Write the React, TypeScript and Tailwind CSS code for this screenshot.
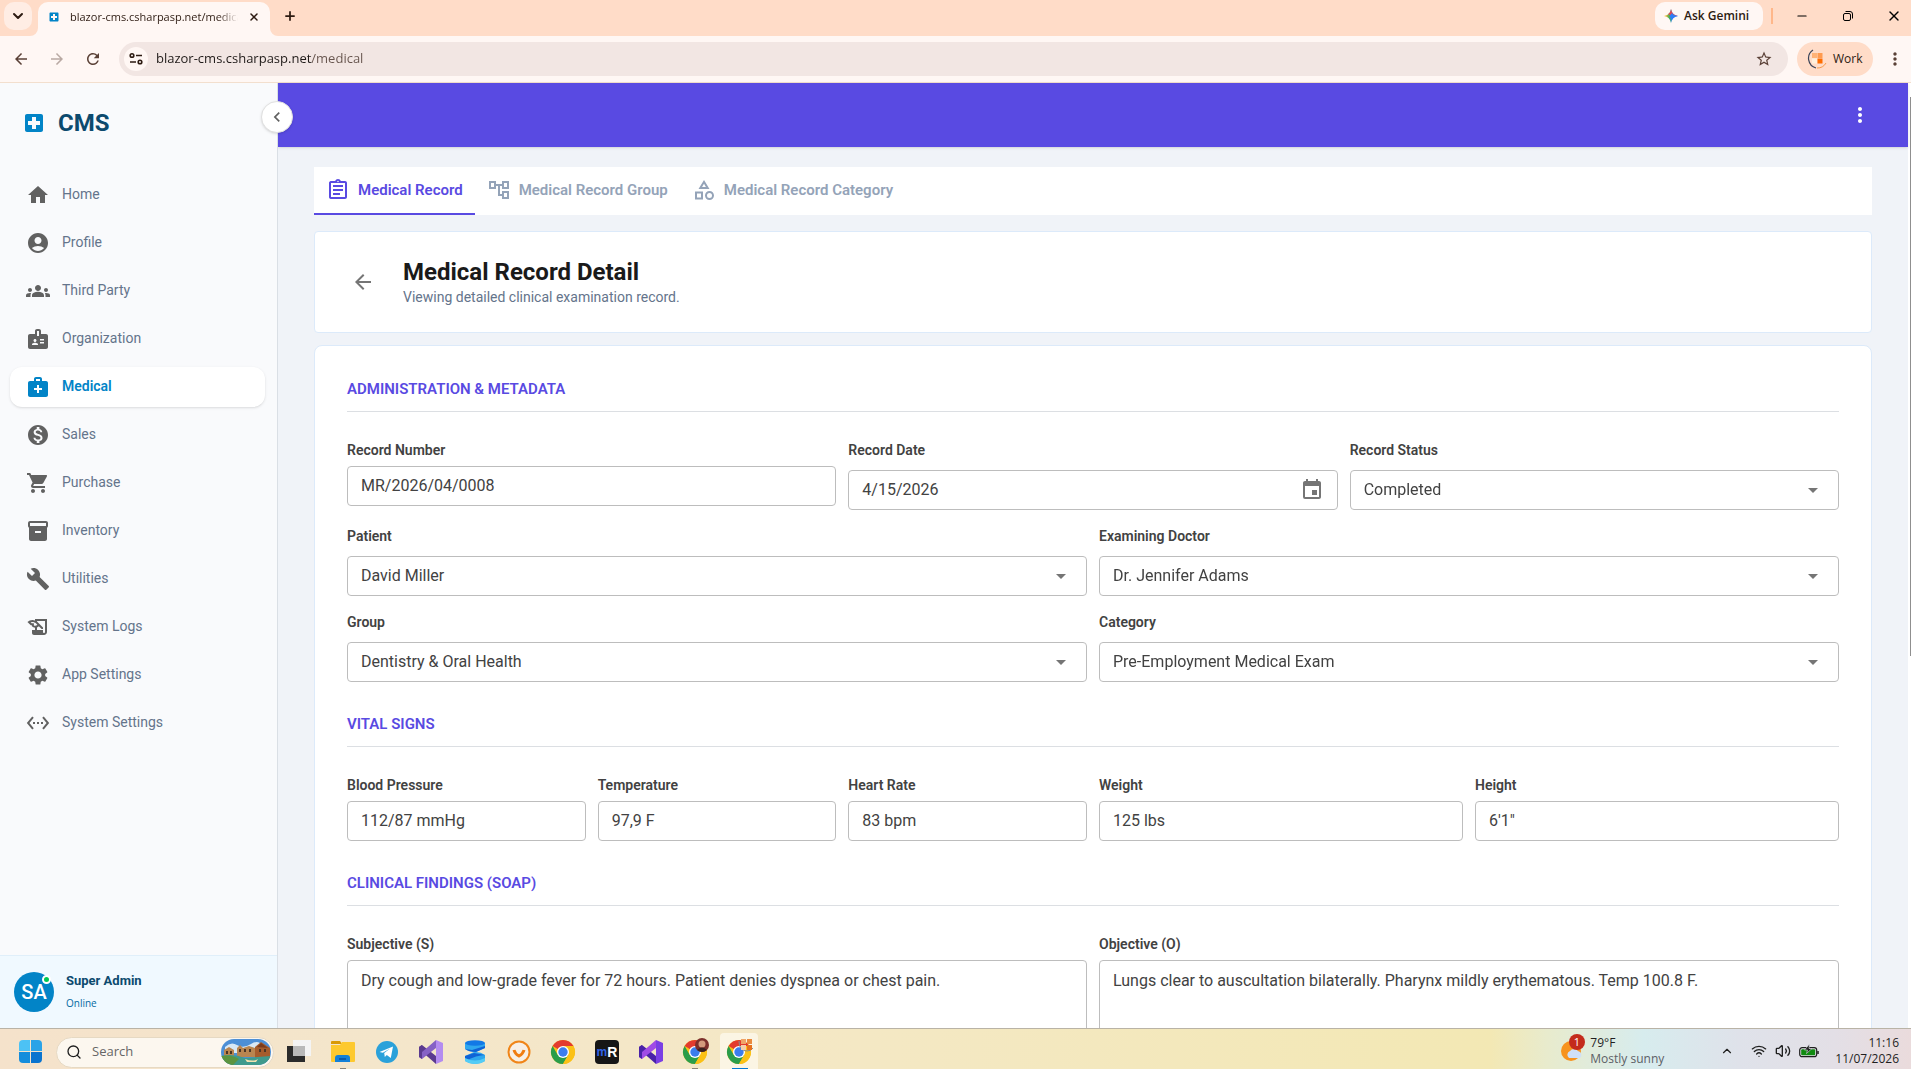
import type { ComponentType, ReactNode } from "react";
import {
  MdAccountCircle, MdArrowBack, MdArrowDropDown, MdArrowForward, MdBadge, MdBuild, MdChevronLeft,
  MdEvent, MdGroups, MdHistoryEdu, MdHome, MdInventory2, MdLocalHospital, MdMedicalServices,
  MdMonetizationOn, MdMoreVert, MdOutlineAccountTree, MdOutlineAssignment, MdOutlineCategory,
  MdRefresh, MdSettings, MdSettingsEthernet, MdShoppingCart, MdStarBorder,
} from "react-icons/md";
import { ChevronDown, ChevronUp, Minus, Plus, Search, Volume2, Wifi, X } from "lucide-react";

type Icon = ComponentType<{ className?: string }>;

const NAV: { label: string; icon: Icon }[] = [
  { label: "Home", icon: MdHome },
  { label: "Profile", icon: MdAccountCircle },
  { label: "Third Party", icon: MdGroups },
  { label: "Organization", icon: MdBadge },
  { label: "Medical", icon: MdMedicalServices },
  { label: "Sales", icon: MdMonetizationOn },
  { label: "Purchase", icon: MdShoppingCart },
  { label: "Inventory", icon: MdInventory2 },
  { label: "Utilities", icon: MdBuild },
  { label: "System Logs", icon: MdHistoryEdu },
  { label: "App Settings", icon: MdSettings },
  { label: "System Settings", icon: MdSettingsEthernet },
];

const TABS: { label: string; icon: Icon }[] = [
  { label: "Medical Record", icon: MdOutlineAssignment },
  { label: "Medical Record Group", icon: MdOutlineAccountTree },
  { label: "Medical Record Category", icon: MdOutlineCategory },
];

/* ---------- browser chrome ---------- */

function TabStrip() {
  return (
    <div className="flex h-9 items-start bg-[#ffdcc8] pl-1 text-[#2d1b12]">
      <button aria-label="Search tabs" className="mt-[2px] flex h-7 w-7 items-center justify-center rounded-[10px] bg-[#ffede4]">
        <ChevronDown className="h-4 w-4" strokeWidth={3} />
      </button>
      <div className="relative ml-[6px] mt-[2px] flex h-[34px] w-[232px] items-center rounded-t-[10px] bg-[#fff7f4] pb-1 pl-[10px]">
        {/* curved feet of the active tab */}
        <svg className="absolute -left-2 bottom-0 h-2 w-2" viewBox="0 0 8 8"><path d="M8 0v8H0a8 8 0 0 0 8-8z" fill="#fff7f4" /></svg>
        <svg className="absolute -right-2 bottom-0 h-2 w-2" viewBox="0 0 8 8"><path d="M0 0v8h8a8 8 0 0 1-8-8z" fill="#fff7f4" /></svg>
        <MdLocalHospital className="h-3 w-3 text-[#0284c7]" />
        <span className="ml-[10px] w-[168px] overflow-hidden whitespace-nowrap text-[11px] [mask-image:linear-gradient(to_right,black_88%,transparent)]">
          blazor-cms.csharpasp.net/medical
        </span>
        <button aria-label="Close tab" className="ml-2 flex h-4 w-4 items-center justify-center"><X className="h-3 w-3" strokeWidth={3} /></button>
      </div>
      <button aria-label="New tab" className="ml-[13px] mt-[9px]"><Plus className="h-[14px] w-[14px]" strokeWidth={3} /></button>
      <div className="flex-1" />
      <button className="mt-[2px] flex h-7 w-[108px] items-center gap-[6px] rounded-[10px] bg-[#fff7f4] pl-[9px] text-xs font-semibold">
        <svg className="h-[14px] w-[14px]" viewBox="0 0 14 14">
          <defs>
            <linearGradient id="gem" x1="0" y1="0" x2="1" y2="0">
              <stop offset="0.1" stopColor="#f5b81c" /><stop offset="0.4" stopColor="#3fae62" /><stop offset="0.6" stopColor="#2f7df6" />
            </linearGradient>
          </defs>
          <path d="M7 0q1 6 7 7-6 1-7 7-1-6-7-7 6-1 7-7z" fill="url(#gem)" />
          <path d="M7 0q1 6 7 7H7L4 5Q6.500 4 7 0z" fill="#e5484d" />
          <path d="M8 4q1.500 2.500 6 3-5 .8-6 4L5.500 7z" fill="#2f7df6" />
        </svg>
        Ask Gemini
      </button>
      <div className="ml-2 mt-2 h-4 w-[2px] bg-[#ffb78a]" />
      <div className="flex text-black">
        <button aria-label="Minimize" className="flex h-8 w-[46px] items-center justify-center pl-3"><Minus className="h-[14px] w-[14px]" strokeWidth={2} /></button>
        <button aria-label="Restore" className="flex h-8 w-[46px] items-center justify-center pl-3">
          <svg className="h-[10px] w-[10px]" viewBox="0 0 10 10" fill="none" stroke="currentColor">
            <rect x="0.5" y="2.500" width="7" height="7" rx="1.500" /><path d="M2.500 .5H7a2.500 2.500 0 0 1 2.500 2.500v4.500" />
          </svg>
        </button>
        <button aria-label="Close" className="flex h-8 w-[46px] items-center justify-center pl-3"><X className="h-4 w-4" strokeWidth={2} /></button>
      </div>
    </div>
  );
}

function Toolbar() {
  return (
    <div className="flex h-[47px] items-center border-b border-[#f3dfce] bg-[#fff7f4] pl-[11px] text-[#5a4036]">
      <button aria-label="Back" className="mr-4 p-px"><MdArrowBack className="h-[18px] w-[18px]" /></button>
      <button aria-label="Forward" className="mr-4 p-px text-[#b9a9a3]"><MdArrowForward className="h-[18px] w-[18px]" /></button>
      <button aria-label="Reload" className="mr-4 p-px"><MdRefresh className="h-[18px] w-[18px]" /></button>
      <div className="flex h-[34px] flex-1 items-center rounded-full bg-[#f2e6e3] pl-[5px] pr-[15px]">
        <button aria-label="Site information" className="flex h-6 w-6 items-center justify-center rounded-full bg-[#fff7f4]">
          <svg className="h-[14px] w-[14px]" viewBox="0 0 14 14" fill="none" stroke="#2d1b12" strokeWidth="1.600">
            <circle cx="3" cy="3.500" r="1.800" /><path d="M7 3.500h6M1 10h6" /><circle cx="11" cy="10" r="1.800" />
          </svg>
        </button>
        {/* the host is darker than the path */}
        <input
          aria-label="Address"
          defaultValue="blazor-cms.csharpasp.net/medical"
          className="ml-2 min-w-0 flex-1 bg-[linear-gradient(to_right,#1f1a18_156px,#66544d_156px)] bg-clip-text text-[13px] text-transparent outline-none"
        />
        <button aria-label="Bookmark"><MdStarBorder className="h-[18px] w-[18px]" /></button>
      </div>
      <button className="ml-[9px] flex h-[34px] w-[76px] items-center gap-[6px] rounded-full bg-[#ffdcc8] pl-[10px] text-xs text-[#2d1b12]">
        <WorkBadge className="h-5 w-5" />
        Work
      </button>
      <button aria-label="Browser menu" className="ml-3 mr-[6px]"><MdMoreVert className="h-5 w-5" /></button>
    </div>
  );
}

function WorkBadge({ className }: { className?: string }) {
  return (
    <svg className={className} viewBox="0 0 20 20">
      <path d="M6 1a10 10 0 0 0 3 18" fill="none" stroke="#3a4358" strokeWidth="1.200" />
      <path d="M10 19a10 10 0 0 0 9-5" fill="none" stroke="#f59a4c" />
      <rect x="5" y="4" width="5" height="5" fill="#ffb377" /><rect x="10.500" y="4" width="5" height="5" fill="#ff9b50" />
      <rect x="5" y="9.500" width="5" height="5" fill="#fff0dc" /><rect x="10.500" y="9.500" width="5" height="5" fill="#ff6d00" />
    </svg>
  );
}

/* ---------- app shell ---------- */

function Sidebar() {
  return (
    <aside className="relative z-10 flex w-[278px] shrink-0 flex-col border-r border-[#dadfe5] bg-[#f9fafc]">
      <div className="flex h-20 items-center gap-3 pl-[22px]">
        <MdLocalHospital className="h-6 w-6 text-[#0284c7]" />
        <span className="text-2xl font-bold text-[#0c4a6e]">CMS</span>
      </div>
      <button aria-label="Collapse sidebar" className="absolute -right-4 top-[18px] flex h-8 w-8 items-center justify-center rounded-full border border-[#e0e0e0] bg-white text-[#616161] shadow">
        <MdChevronLeft className="h-5 w-5" />
      </button>
      <nav className="flex flex-1 flex-col gap-2 px-[10px] pt-3">
        {NAV.map(({ label, icon: NavIcon }) => {
          const active = label === "Medical";
          return (
            <a
              key={label}
              href="#"
              className={
                active
                  ? "mr-[2px] flex h-10 items-center gap-3 rounded-xl bg-white pl-4 text-sm font-semibold text-[#0284c7] shadow-sm"
                  : "mr-[2px] flex h-10 items-center gap-3 rounded-xl pl-4 text-sm text-[#64748b]"
              }
            >
              <NavIcon className={active ? "h-6 w-6 text-[#0284c7]" : "h-6 w-6 text-[#616161]"} />
              <span className="pb-[2px]">{label}</span>
            </a>
          );
        })}
      </nav>
      <div className="flex h-[73px] items-center gap-3 border-t border-[#e0effa] bg-[#f0f9ff] pl-[14px]">
        <div className="relative flex h-10 w-10 items-center justify-center rounded-full bg-[#0284c7] text-xl font-medium text-white">
          SA
          <span className="absolute right-[3px] top-[3px] h-[9px] w-[9px] rounded-full border-2 border-white bg-[#00c853]" />
        </div>
        <div className="flex flex-col gap-[6px]">
          <span className="text-[13px] font-bold leading-4 text-[#0c4a6e]">Super Admin</span>
          <span className="font-['Open_Sans',sans-serif] text-[10px] leading-4 text-[#0369a1]">Online</span>
        </div>
      </div>
    </aside>
  );
}

/* ---------- form pieces ---------- */

const LABEL = "text-sm font-semibold leading-[21px] text-[#424242]";
const BOX = "h-10 w-full rounded border border-[#bdbdbd] bg-white px-[13px] text-base text-[#424242] outline-none";

function TextField({ id, label, value, span }: { id: string; label: string; value: string; span: string }) {
  return (
    <div className={`flex flex-col gap-[5px] ${span}`}>
      <label htmlFor={id} className={LABEL}>{label}</label>
      <input id={id} defaultValue={value} className={`${BOX} pb-[2px]`} />
    </div>
  );
}

function SelectField({ id, label, value, span }: { id: string; label: string; value: string; span: string }) {
  return (
    <div className={`flex flex-col gap-[9px] ${span}`}>
      <label htmlFor={id} className={LABEL}>{label}</label>
      <div className="relative">
        <select id={id} className={`${BOX} appearance-none`}><option>{value}</option></select>
        <MdArrowDropDown className="pointer-events-none absolute right-[14px] top-2 h-6 w-6 text-[#757575]" />
      </div>
    </div>
  );
}

function AreaField({ id, label, value }: { id: string; label: string; value: string }) {
  return (
    <div className="col-span-6 flex flex-col gap-[5px]">
      <label htmlFor={id} className={LABEL}>{label}</label>
      <textarea id={id} rows={4} defaultValue={value} className="w-full resize-none rounded border border-[#bdbdbd] px-[13px] py-2 text-base text-[#424242] outline-none" />
    </div>
  );
}

function Section({ title, children }: { title: string; children: ReactNode }) {
  return (
    <section>
      <h2 className="border-b border-[#dcdfe3] pb-[10px] text-[15px] font-semibold leading-[23px] text-[#594ae2]">{title}</h2>
      <div className="mt-7 grid grid-cols-12 gap-x-3 gap-y-4">{children}</div>
    </section>
  );
}

function RecordPage() {
  return (
    <main className="min-h-0 flex-1 overflow-y-auto bg-[#f0f3f8] px-9 pt-5 [scrollbar-width:none]">
      <div className="flex h-12 bg-white">
        {TABS.map(({ label, icon: TabIcon }, i) => (
          <button
            key={label}
            className={
              i === 0
                ? "flex items-center gap-2 border-b-2 border-[#594ae2] px-3 text-[15px] font-semibold text-[#594ae2]"
                : "flex items-center gap-2 border-b-2 border-transparent px-3 text-[15px] font-semibold text-[#94a3b8]"
            }
          >
            <TabIcon className="h-6 w-6" />
            {label}
          </button>
        ))}
      </div>

      <header className="mt-4 flex h-[102px] items-center rounded border border-[#dceafa] bg-white pl-9">
        <button aria-label="Back to list" className="mr-7 text-[#757575]"><MdArrowBack className="h-6 w-6" /></button>
        <div>
          <h1 className="text-2xl font-bold leading-[30px] text-[#1a1a1a]">Medical Record Detail</h1>
          <p className="text-sm text-[#64748b]">Viewing detailed clinical examination record.</p>
        </div>
      </header>

      <form className="mt-3 flex flex-col gap-[31px] rounded-lg border border-[#dceafa] bg-white p-8">
        <Section title="ADMINISTRATION & METADATA">
          <TextField id="number" label="Record Number" value="MR/2026/04/0008" span="col-span-4" />
          <div className="col-span-4 flex flex-col gap-[9px]">
            <label htmlFor="date" className={LABEL}>Record Date</label>
            <div className="relative">
              <input id="date" defaultValue="4/15/2026" className={`${BOX} pb-[2px]`} />
              <button type="button" aria-label="Pick a date" className="absolute right-[14px] top-2 text-[#757575]"><MdEvent className="h-6 w-6" /></button>
            </div>
          </div>
          <SelectField id="status" label="Record Status" value="Completed" span="col-span-4" />
          <SelectField id="patient" label="Patient" value="David Miller" span="col-span-6" />
          <SelectField id="doctor" label="Examining Doctor" value="Dr. Jennifer Adams" span="col-span-6" />
          <SelectField id="group" label="Group" value="Dentistry & Oral Health" span="col-span-6" />
          <SelectField id="category" label="Category" value="Pre-Employment Medical Exam" span="col-span-6" />
        </Section>
        <Section title="VITAL SIGNS">
          <TextField id="bp" label="Blood Pressure" value="112/87 mmHg" span="col-span-2" />
          <TextField id="temp" label="Temperature" value="97,9 F" span="col-span-2" />
          <TextField id="hr" label="Heart Rate" value="83 bpm" span="col-span-2" />
          <TextField id="weight" label="Weight" value="125 lbs" span="col-span-3" />
          <TextField id="height" label="Height" value={'6\'1"'} span="col-span-3" />
        </Section>
        <Section title="CLINICAL FINDINGS (SOAP)">
          <AreaField id="subjective" label="Subjective (S)" value="Dry cough and low-grade fever for 72 hours. Patient denies dyspnea or chest pain." />
          <AreaField id="objective" label="Objective (O)" value="Lungs clear to auscultation bilaterally. Pharynx mildly erythematous. Temp 100.8 F." />
        </Section>
      </form>
    </main>
  );
}

/* ---------- taskbar ---------- */

function ChromeLogo({ children }: { children?: ReactNode }) {
  return (
    <svg className="h-[28px] w-[28px]" viewBox="0 0 28 28">
      <circle cx="14" cy="14" r="12" fill="#fbc116" />
      <path d="M14 14 3.600 8A12 12 0 0 1 24.400 8z" fill="#e33b2e" />
      <path d="M3.600 8A12 12 0 0 0 14 26l5.200-9L14 14 8.800 17z" fill="#2a9d4a" />
      <path d="M14 8h10.400A12 12 0 0 1 14 26l5.200-9z" fill="#fbc116" />
      <circle cx="14" cy="14" r="6" fill="#fff" />
      <circle cx="14" cy="14" r="4.700" fill="#3b7ded" />
      {children}
    </svg>
  );
}

function StudioLogo({ dark, mid, light }: { dark: string; mid: string; light: string }) {
  return (
    <svg className="h-6 w-6" viewBox="0 0 24 24">
      <path d="M0 7l3-2 14 11v8L5 13.500 3 15z" fill={dark} />
      <path d="M0 7v10l3 2L17 8V0L6 9.500 3 12z" fill={mid} />
      <path d="M0 7l3-2v14l-3-2z" fill={dark} />
      <path d="M17 0l7 3v18l-7 3z" fill={light} />
    </svg>
  );
}

const APPS: { name: string; art: ReactNode }[] = [
  {
    name: "Task view",
    art: (
      <svg className="h-6 w-6" viewBox="0 0 24 24">
        <rect x="0" y="6" width="18" height="16" fill="#2b2b2b" /><rect x="6" y="0" width="18" height="16" fill="#f4f4f4" />
        <rect x="6" y="6" width="12" height="10" fill="#b9b9b9" />
      </svg>
    ),
  },
  {
    name: "File Explorer",
    art: (
      <svg className="h-6 w-6" viewBox="0 0 24 24">
        <path d="M0 2q0-1 1-1h8l2 3H0z" fill="#d99a07" /><path d="M0 5h9l2-3h12q1 0 1 1v18q0 1-1 1H1q-1 0-1-1z" fill="#fdc92f" />
        <path d="M4 22v-4q0-3 3-3h9q3 0 3 3v4z" fill="#1380d8" /><path d="M8 18h7v2H8z" fill="#0b5cad" />
      </svg>
    ),
  },
  {
    name: "Telegram",
    art: (
      <svg className="h-6 w-6" viewBox="0 0 24 24">
        <circle cx="12" cy="12" r="11" fill="#2aa1da" /><path d="M4.500 12 18 6.500 15.800 18l-4-3-2 2-.6-4 6-4.500-7.400 4.300z" fill="#fff" />
      </svg>
    ),
  },
  { name: "Visual Studio 2022", art: <StudioLogo dark="#5b3a8f" mid="#8661c5" light="#b48cf0" /> },
  {
    name: "Database Studio",
    art: (
      <svg className="h-6 w-6" viewBox="0 0 24 24">
        <path d="M2 3v6q4 3 9 3L2 16v5q5 3 10 3t10-3v-6q-4-3-9-3l9-4V3z" fill="#2fa7ee" />
        <path d="M2 9q4 3 11 3l9-4v-2L9 10zM2 21v-5l9-3 11 2q-8 0-20 6z" fill="#0f62d6" />
        <ellipse cx="12" cy="3" rx="10" ry="2.800" fill="#1279e6" /><path d="M2 18q10 5 20 0v3q-4 3-10 3T2 21z" fill="#54ccf5" />
      </svg>
    ),
  },
  {
    name: "Download manager",
    art: (
      <svg className="h-6 w-6" viewBox="0 0 24 24">
        <circle cx="12" cy="12" r="10.500" fill="#f7efe6" stroke="#f08519" strokeWidth="2" />
        <path d="M7 10q1 4 5 6 4-2 5-6" fill="none" stroke="#f07d12" strokeWidth="3" />
      </svg>
    ),
  },
  { name: "Chrome", art: <ChromeLogo /> },
  {
    name: "mRemoteNG",
    art: (
      <span className="flex h-6 w-6 items-center justify-center rounded bg-[#161616] font-['Liberation_Sans',sans-serif] text-xs font-bold text-[#2f62e8]">
        m<span className="text-sm text-white">R</span>
      </span>
    ),
  },
  { name: "Visual Studio", art: <StudioLogo dark="#4a22a8" mid="#a04be6" light="#7b3fe4" /> },
  {
    name: "Chrome, personal profile",
    art: (
      <ChromeLogo>
        <circle cx="21" cy="7" r="7" fill="#7c2f2b" /><circle cx="21" cy="6" r="3.500" fill="#d39a7c" /><path d="M16 12q5-5 10 0-5 4-10 0z" fill="#3a2320" />
      </ChromeLogo>
    ),
  },
  {
    name: "Chrome, work profile",
    art: (
      <ChromeLogo>
        <path d="M14 3q0 10 8 10 4 0 6-3" fill="none" stroke="#8b8b8b" />
        <rect x="16" y="1" width="5" height="5" fill="#f0a467" /><rect x="22" y="1" width="5" height="5" fill="#ea8a3e" />
        <rect x="16" y="7" width="5" height="5" fill="#f6cfa8" /><rect x="22" y="7" width="5" height="5" fill="#e8711c" />
      </ChromeLogo>
    ),
  },
];

function Taskbar() {
  return (
    <footer className="flex h-[41px] shrink-0 items-center border-t border-[#b9b3a6] bg-[linear-gradient(to_right,#f5e2cb_0%,#f4e6cb_20%,#f4e8c4_45%,#f3e8b4_78%,#e8ebcd_81%,#d7ecee_86%,#dfe2ea_91%,#e3dfe6_96%,#eadbdc_100%)] text-[#1f1f1f]">
      <button aria-label="Start" className="ml-[19px] mt-1 grid h-[23px] w-[23px] grid-cols-2 gap-px">
        <span className="rounded-tl-sm bg-[#4cc2f5]" /><span className="rounded-tr-sm bg-[#2ba3e8]" />
        <span className="rounded-bl-sm bg-[#158ddc]" /><span className="rounded-br-sm bg-[#0a74cf]" />
      </button>
      <div className="ml-[14px] mr-[3px] mt-[6px] flex h-[31px] w-[218px] items-center overflow-hidden rounded-full border border-[#e6d9c3] bg-[#fcf7ef] pl-[9px] pr-[2px]">
        <Search className="h-4 w-4 shrink-0" strokeWidth={2} />
        <input aria-label="Search Windows" placeholder="Search" className="ml-[10px] min-w-0 flex-1 bg-transparent text-[13px] outline-none placeholder:text-[#666]" />
        <svg className="h-[26px] w-[50px] shrink-0" viewBox="0 0 50 26">
          <defs><clipPath id="oval"><rect width="50" height="26" rx="13" /></clipPath></defs>
          <g clipPath="url(#oval)">
            <rect width="50" height="26" fill="#4d8fd6" /><path d="M4 8q6-6 12-2t14-1 12 3v6H4z" fill="#d9e8f4" />
            <path d="M3 11l5-3 5 3v8H3zM16 9l3-3 3 3 6-2 6 2v9H16z" fill="#b98550" /><path d="M34 8l6-5 9 6v12H34z" fill="#a65c2c" />
            <path d="M5 12h2v3H5zM9 12h2v3H9zM18 10h2v3h-2zM23 10h2v3h-2zM28 10h2v3h-2zM38 10h2v3h-2zM43 10h2v3h-2z" fill="#4a3526" />
            <path d="M36 8l4-4 7 5z" fill="#7a3b1d" /><path d="M0 17q12-3 24 2l26-2v9H0z" fill="#3f9a8c" />
            <path d="M0 17q10-2 18 3l-6 6H0z" fill="#5c9440" /><path d="M24 20q8 3 13 0l-2 3h-9z" fill="#f1e2b0" />
          </g>
        </svg>
      </div>
      <div className="flex h-full items-end">
        {APPS.map(({ name, art }, i) => (
          <button key={name} aria-label={name} className="flex h-9 w-11 items-center justify-center">
            <span
              className={
                i === APPS.length - 1
                  ? "relative flex h-9 w-[38px] items-center justify-center rounded-t bg-[#fbf5e4] pt-[2px]"
                  : "relative flex h-9 w-[38px] items-center justify-center pt-[2px]"
              }
            >
              {art}
              {(i === 1 || i === 9) && <span className="absolute bottom-0 left-4 h-px w-[6px] bg-[#8a8478]" />}
              {i === 10 && <span className="absolute bottom-0 left-3 h-px w-4 bg-[#0078d4]" />}
            </span>
          </button>
        ))}
      </div>
      <div className="flex-1" />
      <div className="flex items-center pt-1">
        <button className="mr-[56px] flex items-center gap-1 text-left text-xs leading-4">
          <svg className="mb-[6px] h-7 w-[26px]" viewBox="0 0 26 28">
            <circle cx="11" cy="17" r="10" fill="#f7931e" /><path d="M9 24a4 4 0 0 1 1-7 5 5 0 0 1 8 0 4 4 0 0 1 2 7z" fill="#cfe0f7" />
            <circle cx="17" cy="8" r="8" fill="#c42b1c" />
            <text x="17" y="12" textAnchor="middle" fontSize="11" fill="#fff">1</text>
          </svg>
          <span>79°F<br /><span className="text-[#5c6066]">Mostly sunny</span></span>
        </button>
        <button aria-label="Show hidden icons" className="mr-[17px]"><ChevronUp className="h-[14px] w-[14px]" strokeWidth={2} /></button>
        <button aria-label="Network, volume and battery" className="mr-4 flex items-center gap-2">
          <Wifi className="h-4 w-4" strokeWidth={2} />
          <Volume2 className="h-4 w-4" strokeWidth={2} />
          <svg className="h-[14px] w-5" viewBox="0 0 20 14">
            <rect x="0.700" y="3.700" width="17" height="9" rx="2.500" fill="none" stroke="#1f1f1f" strokeWidth="1.200" />
            <rect x="2.200" y="5.200" width="14" height="6" rx="1" fill="#108a10" /><path d="M19 7v3" stroke="#1f1f1f" strokeWidth="1.500" />
            <path d="M10.500 0 5.500 6h3L7.500 9.500 13 4.500h-3z" fill="#1f1f1f" stroke="#e0e2ea" strokeWidth="0.600" />
          </svg>
        </button>
        <div className="mr-3 text-right text-xs leading-4">11:16<br />11/07/2026</div>
      </div>
    </footer>
  );
}

export default function App() {
  return (
    <div className="flex h-screen flex-col overflow-hidden font-['Open_Sans','Noto_Sans',sans-serif]">
      <TabStrip />
      <Toolbar />
      <div className="flex min-h-0 flex-1 font-['Roboto',sans-serif]">
        <Sidebar />
        <div className="flex min-w-0 flex-1 flex-col">
          <div className="z-[5] flex h-16 shrink-0 items-center justify-end bg-[#594ae2] pr-9 text-white shadow">
            <button aria-label="More options"><MdMoreVert className="h-6 w-6" /></button>
          </div>
          <RecordPage />
        </div>
        {/* page scroll position */}
        <div className="flex w-[3px] flex-col items-end bg-white pt-[14px]">
          <div className="h-3/5 w-px bg-[#8f8f8f]" />
        </div>
      </div>
      <Taskbar />
    </div>
  );
}
